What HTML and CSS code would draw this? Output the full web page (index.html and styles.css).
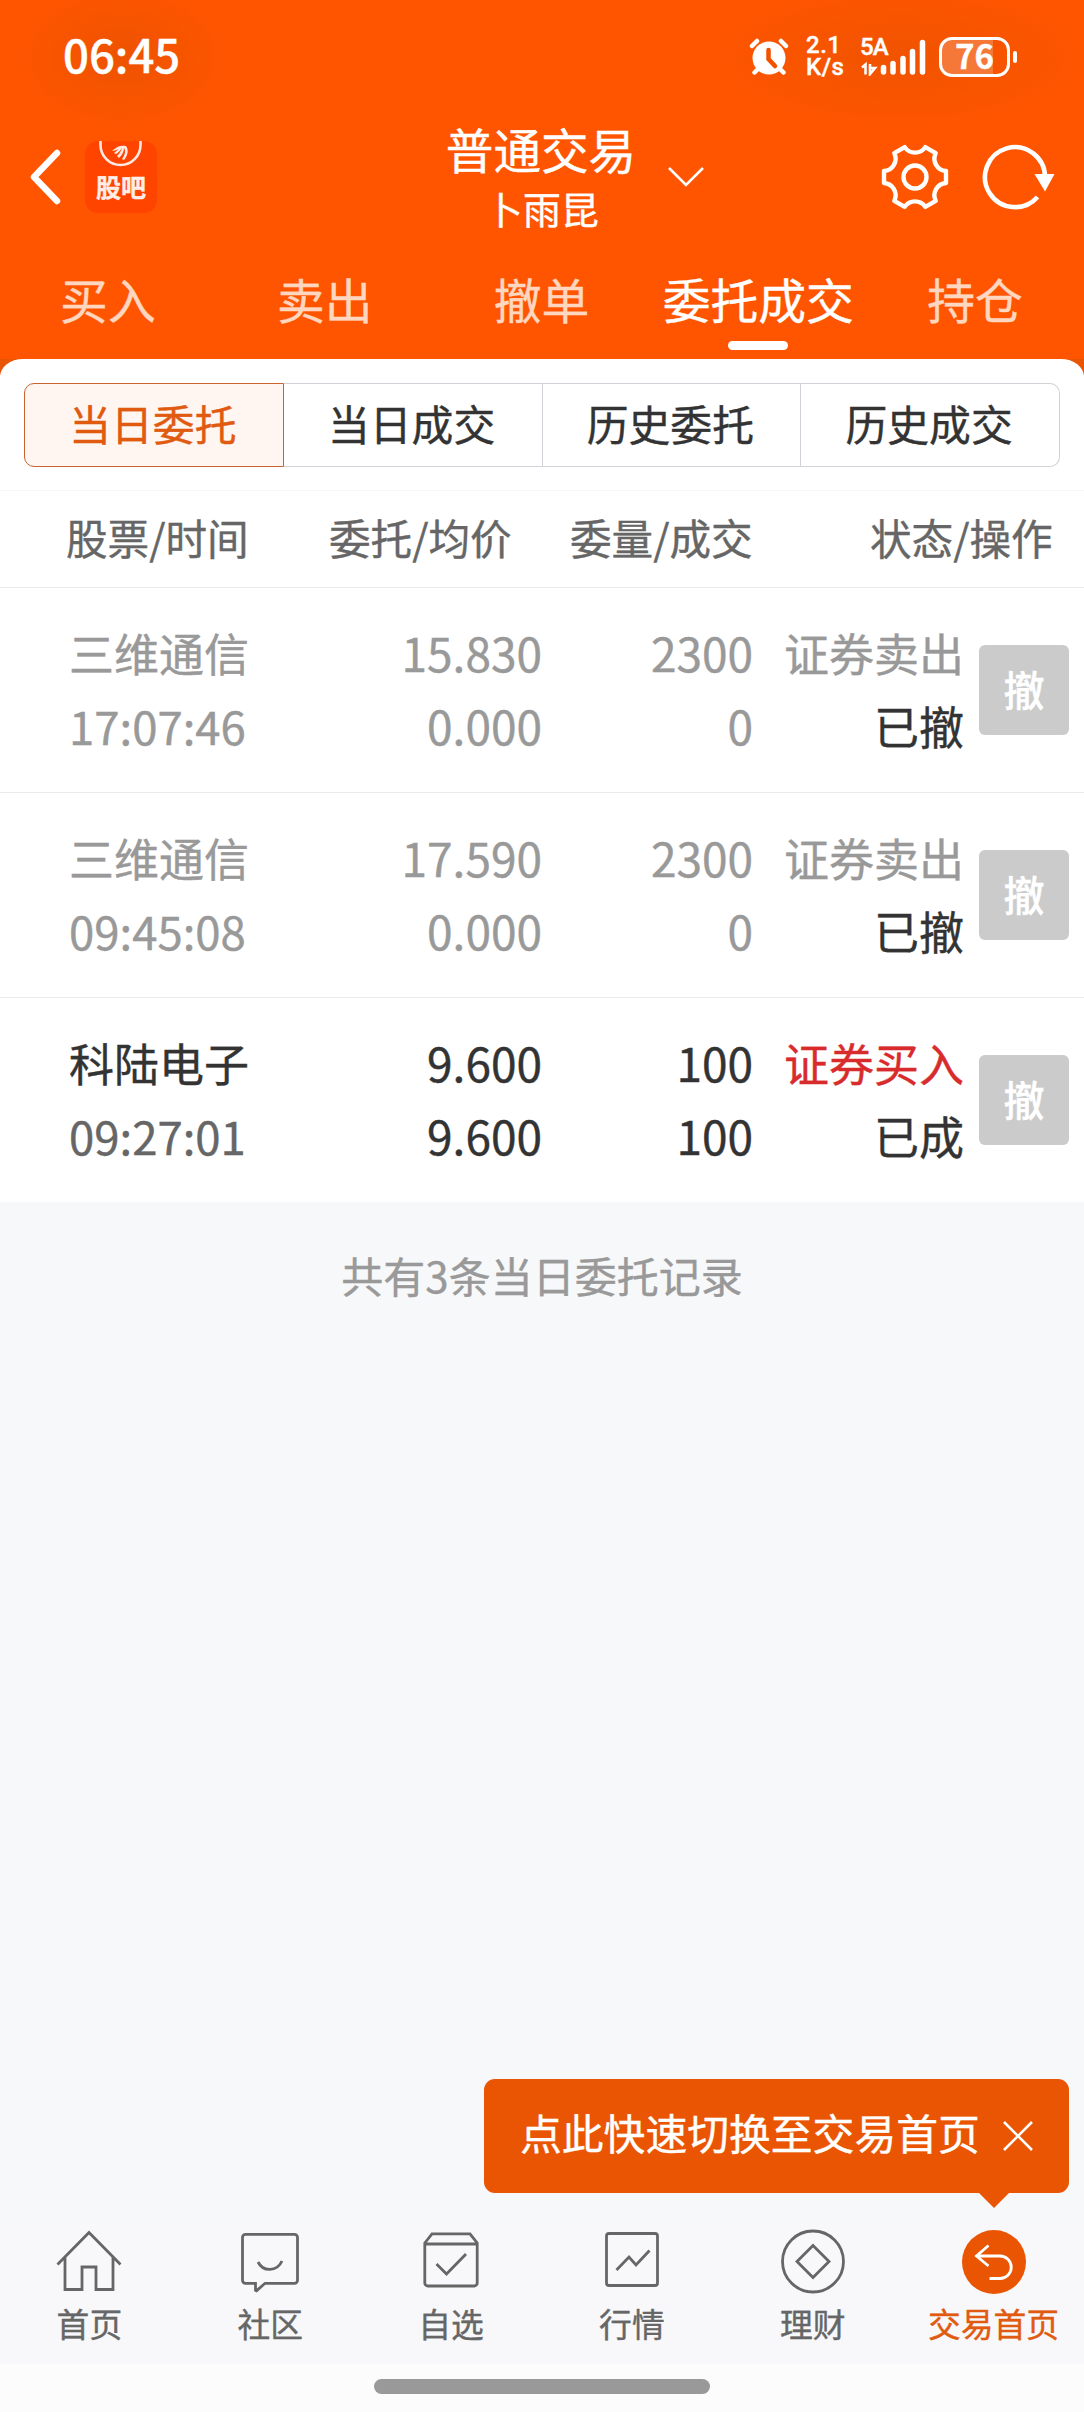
FILE: index.html
```html
<!DOCTYPE html>
<html lang="zh-CN">
<head>
  <meta charset="UTF-8">
  <meta name="viewport" content="width=device-width, initial-scale=1">
  <title>普通交易 - 委托成交</title>
  <link rel="stylesheet" href="styles.css">
</head>
<body>
  <header class="header">
    <div class="status-bar">
      <span class="clock">06:45</span>
      <div class="status-icons">
        <svg class="alarm" width="40" height="38" viewBox="0 0 40 38">
          <g stroke="#fff" stroke-width="4.5" stroke-linecap="round" fill="none">
            <path d="M3 8l5-5M37 8l-5-5M5.500 34.500l5-5M34.500 34.500l-5-5"/>
          </g>
          <circle cx="20" cy="20" r="16.500" fill="#fff"/>
          <path d="M19.500 12v9l6.500 7" stroke="#f25100" stroke-width="4.500" stroke-linecap="round" fill="none"/>
        </svg>
        <div class="speed"><span>2.1</span><span>K/s</span></div>
        <div class="network">
          <span class="net-type">5A</span>
          <svg width="66" height="38" viewBox="0 0 66 38">
            <g stroke="#fff" stroke-width="5.500" stroke-linecap="round">
              <path d="M23.500 29.500v4.500M33 25.500v8.500M43 20.500v13.500M52.500 13.500v20.500M62.500 4.500v29.500"/>
            </g>
            <path d="M2 29.500l3.500-3v10M10 26v10l5-6h-4" stroke="#fff" stroke-width="2.600" fill="none"/>
          </svg>
        </div>
        <div class="battery"><span>76</span></div>
        <i class="battery-tip"></i>
      </div>
    </div>

    <div class="title-bar">
      <div class="title-left">
        <svg class="back" width="32" height="56" viewBox="0 0 32 56">
          <path d="M28 4L5 28l23 24" fill="none" stroke="#fff" stroke-width="6.500" stroke-linecap="round" stroke-linejoin="round"/>
        </svg>
        <div class="guba">
          <svg width="72" height="34" viewBox="0 0 72 34">
            <path d="M15.500 0v4a20 20 0 0 0 40 0V0" fill="none" stroke="#ffe9e2" stroke-width="2.600"/>
            <path d="M27 10c5-5 9-6 14-5 3 4 2 9-2 14l-2-1c3-4 4-8 2-11 0 4-2 7-5 10l-2-2c3-3 4-5 5-8-2 3-4 5-6 6l-2-1c2-1 3-3 4-4-2 1-4 2-6 2z" fill="#ffe9e2"/>
          </svg>
          <span>股吧</span>
        </div>
      </div>
      <div class="account">
        <h1>普通交易</h1>
        <p>卜雨昆</p>
      </div>
      <div class="title-right">
        <svg class="arrow-down" width="40" height="24" viewBox="0 0 40 24">
          <path d="M3 3l17 17L37 3" fill="none" stroke="#fff" stroke-width="2.600"/>
        </svg>
        <svg class="gear" width="68" height="68" viewBox="-34 -34 68 68">
          <g fill="none" stroke="#fff" stroke-width="4.400" stroke-linejoin="round">
            <path d="M10.300-29.850L20.700-23.850A12.400 12.400 0 0 0 31-6V6A12.400 12.400 0 0 0 20.700 23.850L10.300 29.850A12.400 12.400 0 0 0-10.300 29.850L-20.700 23.850A12.400 12.400 0 0 0-31 6V-6A12.400 12.400 0 0 0-20.700-23.850L-10.300-29.850A12.400 12.400 0 0 0 10.300-29.850z"/>
            <circle r="11.500"/>
          </g>
        </svg>
        <svg class="refresh" width="76" height="68" viewBox="-34 -34 76 68">
          <path d="M30 0A30 30 0 1 0 22.500 20" fill="none" stroke="#fff" stroke-width="4.600"/>
          <path d="M19.500-3h20L30 14.500z" fill="#fff"/>
        </svg>
      </div>
    </div>

    <nav class="tabs">
      <a class="tab">买入</a>
      <a class="tab">卖出</a>
      <a class="tab">撤单</a>
      <a class="tab active">委托成交</a>
      <a class="tab">持仓</a>
    </nav>
  </header>

  <div class="panel-wrap">
    <div class="panel">
      <div class="segments">
        <button class="segment active">当日委托</button>
        <button class="segment">当日成交</button>
        <button class="segment">历史委托</button>
        <button class="segment">历史成交</button>
      </div>
    </div>
  </div>

  <main class="orders">
    <div class="order-head">
      <span>股票/时间</span>
      <span>委托/均价</span>
      <span>委量/成交</span>
      <span>状态/操作</span>
    </div>

    <div class="order canceled">
      <div class="stock"><p>三维通信</p><p class="num time">17:07:46</p></div>
      <div class="num"><p>15.830</p><p>0.000</p></div>
      <div class="num"><p>2300</p><p>0</p></div>
      <div class="state"><p class="side">证券卖出</p><p class="result">已撤</p></div>
      <button class="cancel-btn">撤</button>
    </div>

    <div class="order canceled">
      <div class="stock"><p>三维通信</p><p class="num time">09:45:08</p></div>
      <div class="num"><p>17.590</p><p>0.000</p></div>
      <div class="num"><p>2300</p><p>0</p></div>
      <div class="state"><p class="side">证券卖出</p><p class="result">已撤</p></div>
      <button class="cancel-btn">撤</button>
    </div>

    <div class="order">
      <div class="stock"><p>科陆电子</p><p class="num time">09:27:01</p></div>
      <div class="num"><p>9.600</p><p>9.600</p></div>
      <div class="num"><p>100</p><p>100</p></div>
      <div class="state"><p class="side buy">证券买入</p><p class="result">已成</p></div>
      <button class="cancel-btn">撤</button>
    </div>
  </main>

  <p class="summary">共有3条当日委托记录</p>

  <footer class="footer">
    <div class="tip">
      <span>点此快速切换至交易首页</span>
      <svg width="32" height="32" viewBox="0 0 32 32">
        <path d="M2 2l28 28M30 2L2 30" stroke="#fff" stroke-width="2.600"/>
      </svg>
    </div>
    <nav class="bottom-nav">
      <a class="nav-item">
        <svg width="66" height="66" viewBox="0 0 66 66">
          <path d="M1.500 35.500L33 3.500l31.500 32M9 28.500v32h17V38h14v22.500h17v-32"/>
        </svg>
        <span>首页</span>
      </a>
      <a class="nav-item">
        <svg width="66" height="66" viewBox="0 0 66 66">
          <path d="M8.500 5.300h49a3 3 0 0 1 3 3v43a3 3 0 0 1-3 3H28l-8.500 7.500-1-.5v-7h-10a3 3 0 0 1-3-3v-43a3 3 0 0 1 3-3zM21 33c5 10 19 10 24-1"/>
        </svg>
        <span>社区</span>
      </a>
      <a class="nav-item">
        <svg width="66" height="66" viewBox="0 0 66 66">
          <path d="M6.800 14L14 4.800h38L59.200 14v40a3 3 0 0 1-3 3H9.800a3 3 0 0 1-3-3zM6.800 15h52.400M18.500 35l10 10L48 25"/>
        </svg>
        <span>自选</span>
      </a>
      <a class="nav-item">
        <svg width="66" height="66" viewBox="0 0 66 66">
          <rect x="7.500" y="4.500" width="51" height="52" rx="2.500"/>
          <path d="M17.500 41l12.500-13 7 8 13.500-14.500"/>
        </svg>
        <span>行情</span>
      </a>
      <a class="nav-item">
        <svg width="66" height="66" viewBox="0 0 66 66">
          <circle cx="33" cy="32.500" r="30.500"/>
          <path d="M33 16.500l16 16-16 16-16-16z"/>
        </svg>
        <span>理财</span>
      </a>
      <a class="nav-item active">
        <svg width="66" height="66" viewBox="0 0 66 66">
          <circle class="disc" cx="33" cy="33" r="32"/>
          <path d="M27.500 16.500L15.500 27l12 10M15.500 27H39a11 11 0 0 1 0 22.500H28.500"/>
        </svg>
        <span>交易首页</span>
      </a>
    </nav>
    <div class="home-bar"><i></i></div>
  </footer>
</body>
</html>
```

FILE: styles.css
```css
* {
  box-sizing: border-box;
}
body {
  margin: 0;
  height: 2412px;
  display: flex;
  flex-direction: column;
  background-color: #f7f8fa;
  color: #333;
  font-family: "Noto Sans CJK SC", "Noto Sans", sans-serif;
  -webkit-text-stroke: 0.4px;
}
p, h1 {
  margin: 0;
  font-weight: 400;
}
button {
  font-family: inherit;
  padding: 0;
}
svg {
  display: block;
  flex: none;
}

/* header */
.header {
  height: 359px;
  color: #fff;
  background:
    radial-gradient(ellipse 110px 75px at 122px 57px, rgba(175, 75, 0, 0.22), transparent),
    radial-gradient(ellipse 200px 75px at 900px 57px, rgba(175, 75, 0, 0.18), transparent),
    #ff5500;
}
.status-bar {
  height: 114px;
  padding: 0 67px 0 63px;
  display: flex;
  justify-content: space-between;
  align-items: center;
}
.clock {
  font-size: 45.500px;
  line-height: 60px;
  font-weight: 500;
  margin-bottom: 8px;
}
.status-icons {
  display: flex;
  align-items: center;
}
.speed {
  width: 40px;
  margin: 0 0 2px 17px;
  display: flex;
  flex-direction: column;
  font: 500 24px/22px Roboto, sans-serif;
  letter-spacing: 0.5px;
}
.network {
  display: grid;
  margin-left: 14px;
}
.network > * {
  grid-area: 1 / 1;
}
.net-type {
  font: 500 24px/18px Roboto, sans-serif;
  letter-spacing: -1px;
}
.battery {
  width: 71px;
  height: 40px;
  margin-left: 13px;
  border: 3px solid #fff;
  border-radius: 13px;
  background: linear-gradient(90deg, #f57838 51px, transparent 51px);
  text-align: center;
  font-size: 33px;
  line-height: 30px;
  font-weight: 700;
}
.battery-tip {
  width: 4px;
  height: 12px;
  margin-left: 3px;
  border-radius: 2px;
  background: #fff;
}
.title-bar {
  height: 126px;
  display: grid;
  grid-template-columns: 1fr 200px 1fr;
  align-items: center;
}
.title-left {
  display: flex;
  align-items: center;
  padding-left: 29px;
}
.guba {
  width: 72px;
  height: 72px;
  margin-left: 24px;
  border-radius: 13px;
  background: #ff4400;
  display: flex;
  flex-direction: column;
  align-items: center;
}
.guba span {
  font-size: 25px;
  line-height: 22px;
  font-weight: 700;
  color: #ffeee8;
}
.account {
  text-align: center;
}
.account h1 {
  font-size: 47.600px;
  line-height: 66px;
  margin: -5px 0 0 -2px;
}
.account p {
  font-size: 37.800px;
  line-height: 52px;
}
.title-right {
  display: flex;
  align-items: center;
  padding-left: 24px;
}
.gear {
  margin-left: 175px;
}
.refresh {
  margin-left: 32px;
}
.tabs {
  height: 119px;
  display: flex;
}
.tab {
  flex: 1;
  display: flex;
  flex-direction: column;
  align-items: center;
  font-size: 47.800px;
  line-height: 70px;
  padding: 24px 1px 0 0;
  color: #ffd6bf;
}
.tab.active {
  color: #fff;
}
.tab.active::after {
  content: "";
  width: 60px;
  height: 9px;
  margin-top: 7px;
  border-radius: 5px;
  background: #fff;
}

/* segmented filter */
.panel-wrap {
  background: linear-gradient(#e85504 16px, #fff 16px);
}
.panel {
  height: 131px;
  padding: 24px;
  background: #fff;
  border-radius: 23px 23px 0 0 / 18px 18px 0 0;
}
.segments {
  height: 84px;
  display: flex;
}
.segment {
  flex: 1;
  border: 1px solid #cfd2d6;
  border-left-width: 0;
  background: #fff;
  color: #333;
  font-size: 41.800px;
  line-height: 78px;
  padding: 0 2px 4px 0;
}
.segment:first-child {
  border-left-width: 1px;
  border-radius: 10px 0 0 10px;
}
.segment:last-child {
  border-radius: 0 10px 10px 0;
}
.segment.active {
  border-color: #c8642f;
  background: #fff5f1;
  color: #e05a10;
}

/* order list */
.orders {
  background: #fff;
}
.order-head {
  height: 98px;
  border-top: 1px solid #f6f6f6;
  border-bottom: 1px solid #ebebeb;
  display: grid;
  grid-template-columns: 263px 241px 300px 1fr;
  padding: 0 0 4px 66px;
  align-items: center;
  font-size: 41.600px;
  line-height: 60px;
  color: #666;
}
.order {
  height: 205px;
  display: grid;
  grid-template-columns: 200px 273px 211px 211px 90px;
  padding: 28px 15px 0 69px;
  border-bottom: 1px solid #ebebeb;
  font-size: 45px;
  line-height: 73px;
}
.order:last-child {
  height: 204px;
  border-bottom: none;
}
.order .num {
  font-size: 46px;
  text-align: right;
}
.order .stock .time {
  font-size: 45.500px;
  text-align: left;
  color: #666;
}
.order .state {
  text-align: right;
}
.order.canceled,
.order.canceled .stock .time {
  color: #999;
}
.order .result {
  color: #333;
}
.order .buy {
  color: #d82c2c;
}
.cancel-btn {
  width: 90px;
  height: 90px;
  margin: 29px 0 0 15px;
  padding-bottom: 5px;
  border: none;
  border-radius: 6px;
  background: #cbcbcb;
  color: #fff;
  font-size: 41px;
  font-weight: 500;
}
.summary {
  margin-top: 42px;
  text-align: center;
  font-size: 42px;
  line-height: 62px;
  color: #999;
}

/* bottom navigation */
.footer {
  position: relative;
  margin-top: auto;
}
.tip {
  position: absolute;
  right: 15px;
  bottom: 219px;
  width: 585px;
  height: 114px;
  padding: 0 35px 0 36px;
  display: flex;
  align-items: center;
  justify-content: space-between;
  border-radius: 11px;
  background: #ea5504;
  color: #fff;
  font-size: 41.800px;
  line-height: 60px;
}
.tip span {
  margin-bottom: 8px;
}
.tip::after {
  content: "";
  position: absolute;
  right: 60px;
  top: 100%;
  border: 15px solid transparent;
  border-top-color: #ea5504;
  border-bottom: none;
}
.bottom-nav {
  height: 145px;
  margin-left: -1px;
  padding-top: 10px;
  display: flex;
  background: #f8f8fb;
}
.nav-item {
  flex: 1 1 0;
  min-width: 0;
  display: flex;
  flex-direction: column;
  align-items: center;
  font-size: 32.800px;
  line-height: 48px;
  color: #666;
}
.nav-item svg {
  fill: none;
  stroke: #666;
  stroke-width: 2.800px;
}
.nav-item span {
  margin-top: 4px;
  white-space: nowrap;
}
.nav-item.active {
  color: #e05a10;
}
.nav-item.active svg {
  stroke: #fff;
}
.nav-item .disc {
  fill: #ea5504;
  stroke: none;
}
.home-bar {
  height: 48px;
  padding-top: 15px;
  background: #fcfcfd;
}
.home-bar i {
  display: block;
  width: 336px;
  height: 15px;
  margin: 0 auto;
  border-radius: 8px;
  background: #999;
}
```
